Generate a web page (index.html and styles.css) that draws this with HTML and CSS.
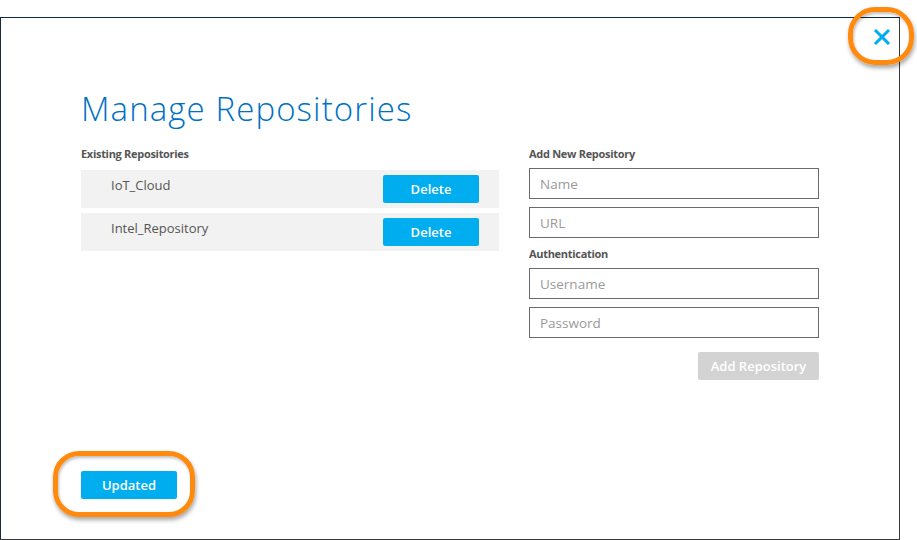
FILE: index.html
```html
<!DOCTYPE html>
<html>
<head>
<meta charset="utf-8">
<link rel="stylesheet" href="styles.css">
</head>
<body>
<div class="dialog">
  <button class="close" aria-label="Close">
    <svg width="18" height="16" viewBox="0 0 18 16"><path d="M2 1 L16 15 M16 1 L2 15" stroke="#00aeef" stroke-width="3" fill="none"/></svg>
  </button>
  <h1 class="title">Manage Repositories</h1>
  <div class="columns">
    <section class="existing">
      <div class="label">Existing Repositories</div>
      <div class="rows">
        <div class="row"><span class="name">IoT_Cloud</span><button class="btn blue">Delete</button></div>
        <div class="row"><span class="name">Intel_Repository</span><button class="btn blue">Delete</button></div>
      </div>
    </section>
    <section class="add">
      <div class="label">Add New Repository</div>
      <input class="field" placeholder="Name">
      <input class="field" placeholder="URL">
      <div class="label auth">Authentication</div>
      <input class="field" placeholder="Username">
      <input class="field" placeholder="Password">
      <div class="actions"><button class="btn grey">Add Repository</button></div>
    </section>
  </div>
  <div class="footer"><button class="btn blue">Updated</button></div>
</div>
<div class="ring ring-update"></div>
<div class="ring ring-close"></div>
</body>
</html>
```
FILE: styles.css
```css
html, body {
  margin: 0;
  padding: 0;
  background: #ffffff;
  font-family: "Open Sans", "Liberation Sans", sans-serif;
}
body {
  width: 917px;
  height: 540px;
  position: relative;
  overflow: hidden;
  padding-top: 17px;
  box-sizing: border-box;
}
.dialog {
  position: relative;
  width: 900px;
  height: 523px;
  box-sizing: border-box;
  border: 1px solid #3a3a3a;
  border-top-color: #0b2a47;
  border-left-color: #1d2836;
  padding: 0 80px 0 80px;
  display: flex;
  flex-direction: column;
}
.close {
  position: absolute;
  right: 8px;
  top: 11px;
  width: 18px;
  height: 16px;
  padding: 0;
  border: 0;
  background: none;
  display: block;
}
.close svg { display: block; }
.title {
  margin: 71px 0 0 0;
  font-size: 33px;
  line-height: 40px;
  font-weight: 300;
  color: #0071c5;
  letter-spacing: 1.1px;
}
.columns {
  display: flex;
  justify-content: space-between;
  margin-top: 17px;
}
.label {
  font-size: 11px;
  line-height: 16px;
  font-weight: 700;
  color: #555555;
  letter-spacing: -0.3px;
}
.existing { width: 418px; }
.existing .label { margin-bottom: 8px; }
.rows {
  display: flex;
  flex-direction: column;
  gap: 5px;
}
.row {
  display: flex;
  align-items: flex-start;
  justify-content: space-between;
  background: #f2f2f2;
  padding: 5px 20px 5px 30px;
}
.name {
  font-size: 13px;
  line-height: 20px;
  color: #555555;
}
.btn {
  border: 0;
  border-radius: 2px;
  height: 28px;
  width: 96px;
  padding: 0;
  font-family: inherit;
  font-size: 13px;
  font-weight: 600;
  color: #ffffff;
  display: block;
}
.blue { background: #00aeef; }
.grey { background: #d3d3d3; width: 121px; }
.add {
  width: 290px;
  display: flex;
  flex-direction: column;
}
.add .label { margin-bottom: 6px; }
.field {
  box-sizing: border-box;
  width: 290px;
  height: 31px;
  border: 1px solid #6b6b6b;
  padding: 0 10px;
  font-family: inherit;
  font-size: 13.5px;
  color: #555555;
  margin: 0 0 8px 0;
  outline: none;
}
.field::placeholder { color: #9a9a9a; }
.actions {
  display: flex;
  justify-content: flex-end;
  margin-top: 6px;
}
.footer {
  margin-top: auto;
  padding-bottom: 40px;
}
.ring {
  position: absolute;
  box-sizing: border-box;
  border: 5px solid #ff8a0d;
  box-shadow: 1px 3px 4px rgba(0,0,0,0.35), inset 1px 2px 3px rgba(0,0,0,0.25);
}
.ring-update {
  left: 53px;
  top: 451px;
  width: 142px;
  height: 66px;
  border-radius: 26px;
}
.ring-close {
  left: 848px;
  top: 7px;
  width: 66px;
  height: 58px;
  border-radius: 27px;
}
```
